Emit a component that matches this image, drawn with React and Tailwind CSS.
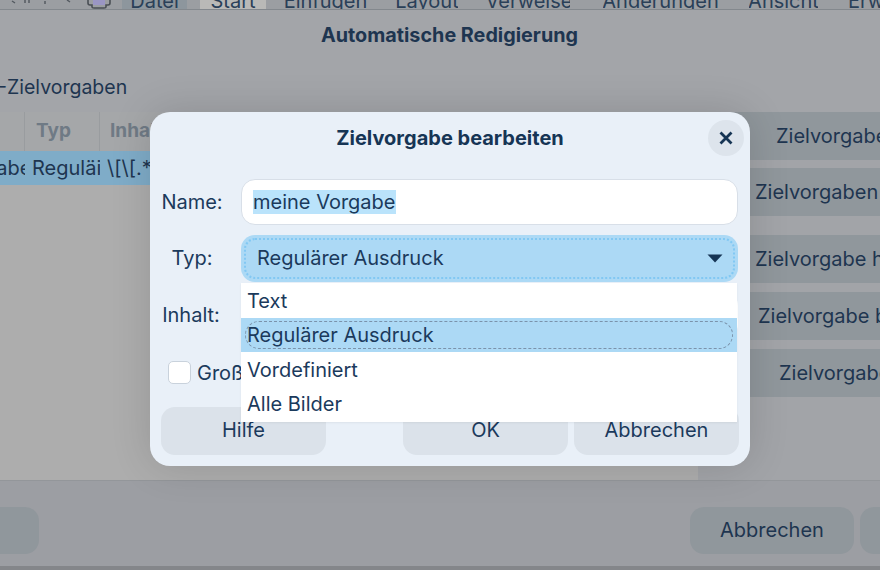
import React from "react";

const ink = "text-[#1b3a5c]";
const dim = "text-[#1e3550]";

function TopTab({ label, className = "" }) {
  return (
    <div className={`flex h-[9px] shrink-0 items-end justify-center overflow-hidden ${className}`}>
      <span className="translate-y-[2px] whitespace-nowrap text-[20px] leading-none text-[#2a4058]">{label}</span>
    </div>
  );
}

function SideButton({ label, pad, className = "" }) {
  return (
    <div className={`flex h-[48px] items-center whitespace-nowrap bg-[#90979c] pb-[1px] text-[20px] ${dim} ${pad} ${className}`}>
      {label}
    </div>
  );
}

export default function App() {
  return (
    <div
      className="relative flex h-[570px] w-[880px] flex-col overflow-hidden bg-[#a3a5a9]"
      style={{ fontFamily: "Inter, 'Noto Sans', sans-serif" }}
    >
      {/* top ribbon tabs */}
      <div className="flex h-[10px] shrink-0 items-start border-b border-[#83888d] bg-[#9b9ea2]">
        <div className="flex h-[9px] w-[122px] shrink-0 items-end overflow-hidden pl-[10px]">
          <svg width="112" height="9" viewBox="0 0 112 9" fill="none">
            <path d="M2 1l3 2M15 0v3M19 0v3M35 1v3M57 0l3 2" stroke="#555b62" strokeWidth="1.5" />
            <path d="M78 0v3q0 2 2 2h2v2q0 1 2 1h10q2 0 2-1v-2h2q2 0 2-2v-3" stroke="#4a4f55" strokeWidth="1.6" />
            <rect x="83" y="0" width="12" height="5" fill="#9a96c4" />
          </svg>
        </div>
        <TopTab label="Datei" className="w-[65px] bg-[#8d969d]" />
        <div className="w-[13px] shrink-0" />
        <TopTab label="Start" className="w-[66px] bg-[#b9b9b7]" />
        <div className="flex grow items-end">
          <TopTab label="Einfügen" className="ml-[17px] w-[85px]" />
          <TopTab label="Layout" className="ml-[28px] w-[62px]" />
          <TopTab label="Verweise" className="ml-[30px] w-[82px]" />
          <TopTab label="Änderungen" className="ml-[33px] w-[115px]" />
          <TopTab label="Ansicht" className="ml-[31px] w-[69px]" />
          <TopTab label="Erweitert" className="ml-[30px] w-[85px] !justify-start" />
        </div>
      </div>

      {/* title */}
      <div className={`flex h-[52px] shrink-0 items-center justify-center pl-[19px] text-[19.8px] font-bold ${dim}`}>
        Automatische Redigierung
      </div>

      {/* section label */}
      <div className={`-ml-[2px] flex h-[50px] shrink-0 items-center whitespace-nowrap pt-[1px] text-[19.5px] ${dim}`}>
        -Zielvorgaben
      </div>

      {/* table and side buttons */}
      <div className="flex h-[368px] shrink-0">
        <div className="flex w-[698px] shrink-0 flex-col bg-[#adadad]">
          <div className="flex h-[39px] items-center bg-[#a5a7a9] text-[19px] font-bold text-[#6f7a85]">
            <div className="h-full w-[25px] border-r border-[#999c9f]" />
            <div className="flex h-full w-[75px] items-center border-r border-[#999c9f] pl-[11px]">Typ</div>
            <div className="pl-[10px]">Inhalt</div>
          </div>
          <div className={`flex h-[34px] items-center overflow-hidden whitespace-nowrap bg-[#7facc8] text-[20px] ${dim}`}>
            <div className="w-[25px] overflow-hidden">
              <div className="ml-[-16px]">gabe</div>
            </div>
            <div className="w-[75px] overflow-hidden pl-[7px]">Reguläi</div>
            <div className="pl-[7px]">{"\\[\\[.*"}</div>
          </div>
        </div>
        <div className="flex grow flex-col overflow-hidden bg-[#a2a4a8]">
          <SideButton label="Zielvorgabe" pad="pl-[78px]" />
          <SideButton label="Zielvorgaben" pad="pl-[57px]" className="mt-[8px]" />
          <SideButton label="Zielvorgabe hinzufügen" pad="pl-[57px]" className="mt-[19px]" />
          <SideButton label="Zielvorgabe bearbeiten" pad="pl-[60px]" className="mt-[9px]" />
          <SideButton label="Zielvorgabe" pad="pl-[81px]" className="mt-[9px]" />
        </div>
      </div>

      {/* bottom buttons */}
      <div className="relative flex grow items-start justify-between border-t border-[#93969a] bg-[#9c9ea3] pb-[3px] pt-[26px]">
        <div className="h-[47px] w-[39px] rounded-r-[14px] bg-[#90979c]" />
        <div className="flex gap-[6px]">
          <div className={`flex h-[47px] w-[164px] items-center justify-center rounded-[14px] bg-[#90979c] pb-[2px] text-[20px] ${dim}`}>
            Abbrechen
          </div>
          <div className="h-[47px] w-[20px] rounded-l-[14px] bg-[#90979c]" />
        </div>
        <div className="absolute inset-x-0 bottom-0 h-[4px] bg-[#84868a]" />
      </div>

      {/* modal dialog */}
      <div className={`absolute left-[150px] top-[112px] flex h-[354px] w-[600px] flex-col rounded-[20px] bg-[#e9f0f8] px-[11px] shadow-[0_0_40px_rgba(0,0,0,0.14)] ${ink}`}>
        <div className="relative flex h-[67px] shrink-0 items-center justify-center pb-[15px] text-[20px] font-bold text-[#163555]">
          Zielvorgabe bearbeiten
          <div className="absolute right-[-5px] top-[8px] flex h-[36px] w-[36px] items-center justify-center rounded-full bg-[#dde4ec]">
            <svg width="14" height="14" viewBox="0 0 14 14" fill="none">
              <path d="M1.5 1.5l11 11M12.5 1.5l-11 11" stroke="#163555" strokeWidth="2.8" />
            </svg>
          </div>
        </div>

        <div className="relative">
          <div className="grid grid-cols-[80px_497px] items-center gap-y-[10px] text-[20px]">
            <div className="pb-[1px] pr-[18px] text-center">Name:</div>
            <div className="flex h-[46px] items-center rounded-[14px] border border-[#d8dfe8] bg-white pl-[11px]">
              <span className="bg-[#bae3fb] leading-[24px]">meine Vorgabe</span>
            </div>

            <div className="pb-[1px] pr-[18px] text-center">Typ:</div>
            <div className="flex h-[47px] items-center justify-between rounded-[14px] bg-[#acd9f5] p-[3px]">
              <div className="flex h-full w-full items-center justify-between rounded-[11px] border-2 border-dotted border-[#82c8f3] pl-[11px] pr-[10px]">
                <span className="pb-[1px]">Regulärer Ausdruck</span>
                <svg width="16" height="9" viewBox="0 0 16 9">
                  <path d="M0.5 0.5h15l-7.5 8z" fill="#163555" />
                </svg>
              </div>
            </div>

            <div className="pr-[20px] text-center">Inhalt:</div>
            <div className="h-[46px] rounded-[14px] bg-white" />
          </div>

          <div className="mt-[23px] flex h-[23px] items-center pl-[7px] text-[20px]">
            <div className="h-[23px] w-[23px] shrink-0 rounded-[5px] border border-[#c9d2dc] bg-white" />
            <span className="ml-[6px] w-[44px] overflow-hidden whitespace-nowrap">Groß-/Kleinschreibung</span>
          </div>

          {/* open dropdown */}
          <div className="absolute left-[80px] top-[104px] flex h-[139px] w-[496px] flex-col justify-center bg-white text-[20px] shadow-[0_1px_2px_rgba(0,0,0,0.06)]">
            <div className="flex h-[35px] items-center pl-[6px]">Text</div>
            <div className="flex h-[34px] items-center bg-[#acd9f5] px-[4px] py-[3px]">
              <div className="flex h-full w-full items-center rounded-full border border-dashed border-[#7b93ab] pl-[1px]">
                Regulärer Ausdruck
              </div>
            </div>
            <div className="flex h-[35px] items-center pl-[6px]">Vordefiniert</div>
            <div className="flex h-[35px] items-center pb-[1px] pl-[6px]">Alle Bilder</div>
          </div>
        </div>

        <div className="mt-[23px] flex text-[20px]">
          <div className="flex h-[48px] w-[165px] items-center justify-center rounded-[14px] bg-[#dbe2ea] pb-[3px]">Hilfe</div>
          <div className="ml-[77px] flex h-[48px] w-[165px] items-center justify-center rounded-[14px] bg-[#dbe2ea] pb-[3px]">OK</div>
          <div className="ml-[6px] flex h-[48px] w-[165px] items-center justify-center rounded-[14px] bg-[#dbe2ea] pb-[3px]">Abbrechen</div>
        </div>
      </div>
    </div>
  );
}
